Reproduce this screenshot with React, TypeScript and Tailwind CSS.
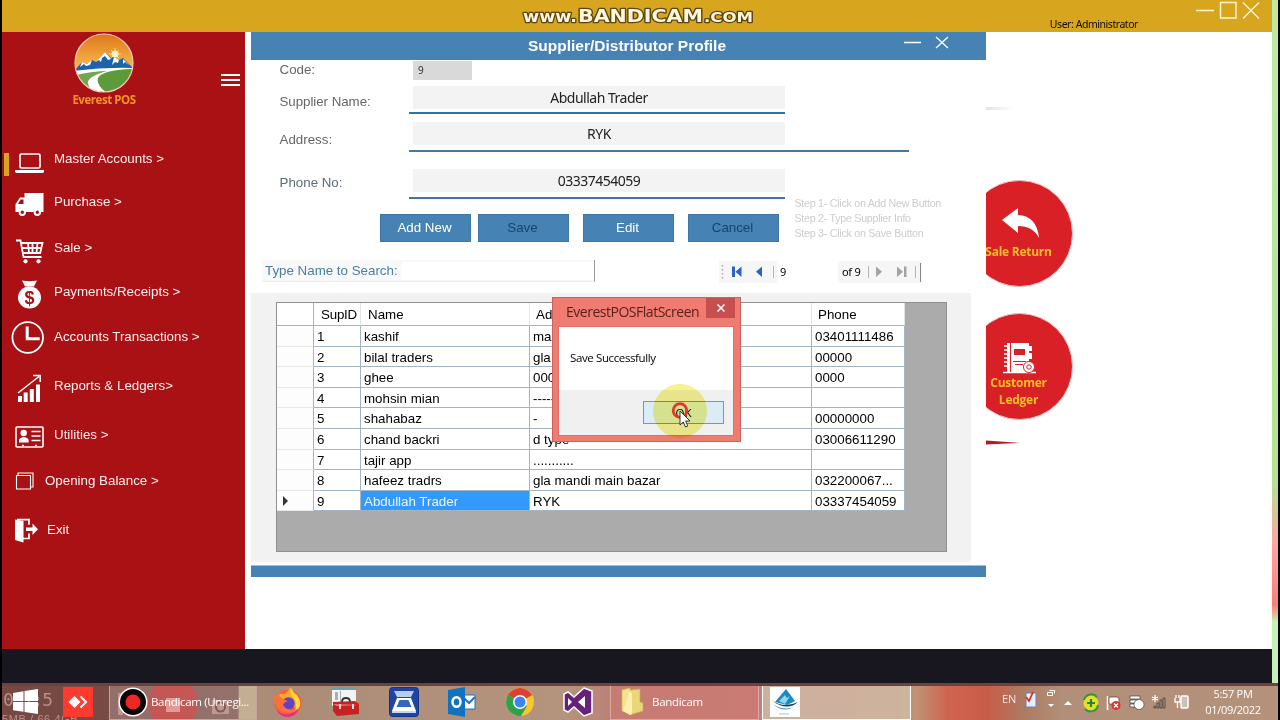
import type { ReactNode } from "react";

const suppliers = [
  { id: "1", name: "kashif", address: "main bazar", phone: "03401111486" },
  { id: "2", name: "bilal traders", address: "gla mandi", phone: "00000" },
  { id: "3", name: "ghee", address: "0000", phone: "0000" },
  { id: "4", name: "mohsin mian", address: "-----", phone: "" },
  { id: "5", name: "shahabaz", address: "-", phone: "00000000" },
  { id: "6", name: "chand backri", address: "d type", phone: "03006611290" },
  { id: "7", name: "tajir app", address: "...........", phone: "" },
  { id: "8", name: "hafeez tradrs", address: "gla mandi main bazar", phone: "032200067..." },
  { id: "9", name: "Abdullah Trader", address: "RYK", phone: "03337454059" },
];

const menuItems = [
  {
    label: "Master Accounts >",
    row: "h-[43px]",
    gap: "ml-[7px]",
    icon: (
      <>
        <rect x="9" y="13" width="20" height="14" rx="1.5" fill="none" stroke="#fff" strokeWidth="1.7" />
        <path d="M4 29h29v1.5q0 1.5-2 1.5H6q-2 0-2-1.5z" />
      </>
    ),
  },
  {
    label: "Purchase >",
    row: "h-[44px]",
    gap: "ml-[7px]",
    icon: (
      <>
        <path d="M13.5 9h19v19h-2.3a4.3 4.3 0 0 0-7.8 0h-7.2a4.3 4.3 0 0 0-7.8 0H4.500v-8L9 13.500h4.500z" />
        <path d="M9.500 15.500h3v4.500H7z" fill="#aa1115" />
        <circle cx="11.300" cy="28.300" r="2.700" fill="none" stroke="#fff" strokeWidth="2" />
        <circle cx="26.300" cy="28.300" r="2.700" fill="none" stroke="#fff" strokeWidth="2" />
      </>
    ),
  },
  {
    label: "Sale >",
    row: "h-[47px]",
    gap: "ml-[7px]",
    icon: (
      <>
        <path
          d="M5 10.500h4.500l3 16.500h18M10 13h21.500l-2.300 10H12M10.700 18h20M17 13l1 10M21.500 13v10M26.500 13l-1 10"
          fill="none"
          stroke="#fff"
          strokeWidth="1.800"
        />
        <circle cx="14.500" cy="31.300" r="2.100" />
        <circle cx="27.500" cy="31.300" r="2.100" />
      </>
    ),
  },
  {
    label: "Payments/Receipts >",
    row: "h-[42px]",
    gap: "ml-[7px]",
    icon: (
      <>
        <path d="M11 6.500q7 1.500 15 0l-3 6h-9z" />
        <ellipse cx="18.500" cy="23.500" rx="11.500" ry="11" />
        <text x="18.500" y="30" textAnchor="middle" fontSize="18" fontWeight="700" fill="#aa1115" fontFamily="Liberation Sans, sans-serif">
          $
        </text>
      </>
    ),
  },
  {
    label: "Accounts Transactions >",
    row: "h-[48px]",
    gap: "ml-[7px]",
    icon: (
      <>
        <circle cx="16.700" cy="18.500" r="15.300" fill="none" stroke="#fff" strokeWidth="1.800" />
        <path d="M16.200 7.500v12.300h12.500" fill="none" stroke="#fff" strokeWidth="3" />
      </>
    ),
  },
  {
    label: "Reports & Ledgers>",
    row: "h-[49px]",
    gap: "ml-[7px]",
    icon: (
      <>
        <path d="M7 28h4v6H7zM12.700 24.500h4V34h-4zM18.800 21h4v13h-4zM25 16.500h4V34h-4z" />
        <path d="M7 25 28 8.500M22 7.500h7.200V14" fill="none" stroke="#fff" strokeWidth="1.500" />
      </>
    ),
  },
  {
    label: "Utilities >",
    row: "h-[49px]",
    gap: "ml-[7px]",
    icon: (
      <>
        <rect x="5" y="10" width="27" height="20" rx="1" fill="none" stroke="#fff" strokeWidth="1.600" />
        <circle cx="12.700" cy="16" r="3.200" />
        <path d="M8 25.500v-2q0-3 4.700-3.500 5 .5 5 3.500v2z" />
        <path d="M20.500 14.500h9M20.500 19h9M20.500 23.500h9M11 28.500h2M24 28.500h2" stroke="#fff" strokeWidth="1.300" />
      </>
    ),
  },
  {
    label: "Opening Balance >",
    row: "h-[44px]",
    gap: "-ml-[2px]",
    icon: (
      <path d="M5.500 12.500h14v13.500h-14zM7 12.500v-2.500h15v14h-2.500" fill="none" stroke="#fff" strokeWidth="1.100" />
    ),
  },
  {
    label: "Exit",
    row: "h-[54px]",
    gap: "ml-0",
    icon: (
      <>
        <path d="M4 7.500 12.500 9v21.500L4 28z" />
        <path d="M6 7.700h12v5M12 26.500h6v-5" fill="none" stroke="#fff" strokeWidth="1.700" />
        <path d="M15 15.500h6.500v-4l5.500 5.700-5.500 5.700v-4H15z" />
      </>
    ),
  },
];

function Sidebar() {
  return (
    <aside className="relative flex w-[243px] shrink-0 flex-col bg-[#aa1115]">
      <div className="flex h-[105px] justify-between pl-[70px] pr-[5px]">
        <div className="flex w-[64px] flex-col items-center">
          <svg className="mt-[1px] h-[60px] w-[60px] shrink-0" viewBox="0 0 60 60">
            <defs>
              <linearGradient id="sky" x1="0" y1="0" x2="0" y2="1">
                <stop offset="0" stopColor="#dd7518" />
                <stop offset=".55" stopColor="#f7b64a" />
              </linearGradient>
              <clipPath id="disc">
                <circle cx="30" cy="30" r="29" />
              </clipPath>
            </defs>
            <g clipPath="url(#disc)">
              <path d="M0 0h60v60H0z" fill="url(#sky)" />
              <circle cx="41" cy="21" r="3.500" fill="#fff3c8" opacity=".9" />
              <path d="M41 15v12M35 21h12M37 17l8 8M45 17l-8 8" stroke="#fff8dc" strokeWidth=".6" />
              <path d="M0 38 8 29l5 2 5-4 4 2 9-10 6 6 3-1 5 3 4-2 11 11v4q-30-3-60 2z" fill="#1d62ad" />
              <path d="m22 29 9-10 6 7-3 1-3-4-3 2-1 4-2-2zM8 29l5 2 5-4-2 5-4 1-2-2-4 3zM40 24l5 3-1 3-3-1-3 3zM49 26l7 7-5-4-2 2z" fill="#fff" />
              <path d="M0 38q30-4 60-3v25H0z" fill="#fff" />
              <path d="M58 36q-30 1-34 9-2 7 9 15h27z" fill="#5c9a3a" />
              <path d="M2 42q18-4 31-4-21 6-19 13 1 4 4 7-12-6-16-16z" fill="#6fa848" />
            </g>
            <circle cx="30" cy="30" r="29" fill="none" stroke="#f4c7bd" strokeWidth="1.200" />
          </svg>
          <span className="-mt-[1px] whitespace-nowrap font-['Open_Sans',sans-serif] text-[11.500px] font-bold leading-[16px] tracking-[-0.450px] text-[#f79322]">
            Everest POS
          </span>
        </div>
        <div className="mt-[42px] flex h-[12px] w-[19px] flex-col justify-between">
          <span className="h-[2px] bg-white" />
          <span className="h-[2px] bg-white" />
          <span className="h-[2px] bg-white" />
        </div>
      </div>
      <span className="absolute left-[2px] top-[121px] h-[23px] w-[5px] bg-[#d7a61e]" />
      {menuItems.map((item) => (
        <div key={item.label} className={`flex items-center pl-[9px] ${item.row}`}>
          <svg className="h-[36px] w-[36px] shrink-0" viewBox="0 0 36 36" fill="#fff">
            {item.icon}
          </svg>
          <span className={`whitespace-nowrap text-[13.330px] leading-[16px] text-[#fdeeee] ${item.gap}`}>
            {item.label}
          </span>
        </div>
      ))}
    </aside>
  );
}

function ActionButton({ label, muted }: { label: string; muted?: boolean }) {
  return (
    <button
      className={`h-[28px] w-[91px] border border-[#3f76a5] bg-[#4682b4] pr-[2px] text-[13.330px] ${
        muted ? "text-[#17456d]" : "text-white"
      }`}
    >
      {label}
    </button>
  );
}

function Field({ value }: { value: string }) {
  return (
    <div className="ml-[4px] h-[23px] w-[372px] bg-[#f3f3f3] text-center font-['Noto_Sans',sans-serif] text-[14px] leading-[23px] tracking-[-0.500px] text-[#222]">
      {value}
    </div>
  );
}

function Navigator() {
  return (
    <div className="flex h-[22px] w-[203px] items-center bg-[#f6f6f6] text-[12px] text-black">
      <svg className="h-[22px] w-[58px]" viewBox="0 0 58 22">
        <path d="M3.500 4v14" stroke="#aaa" strokeWidth="1.500" strokeDasharray="1.500 2.500" />
        <path d="M13 5.500h3v10.500h-3zM22.500 5.500V16l-6-5.300z" fill="#2c62c4" />
        <path d="M43 5.500V16l-6-5.300z" fill="#2c62c4" />
        <path d="M54.500 5v12" stroke="#b5b5b5" />
      </svg>
      <div className="h-[22px] w-[61px] bg-white pl-[3px] font-['Noto_Sans',sans-serif] text-[11px] leading-[21px]">9</div>
      <span className="ml-[4px] whitespace-nowrap font-['Noto_Sans',sans-serif] text-[11px] tracking-[-0.300px]">of 9</span>
      <svg className="ml-auto h-[22px] w-[58px]" viewBox="0 0 58 22">
        <path d="M4.500 5v12M51.500 5v12" stroke="#b5b5b5" />
        <path d="M12 5.500V16l6-5.300zM33 5.500V16l6-5.300zM40 5.500h2.500V16H40z" fill="#a3a3a3" />
        <path d="M56.500 2v19" stroke="#8a8a8a" />
      </svg>
    </div>
  );
}

function Cell({ children, className = "" }: { children?: ReactNode; className?: string }) {
  return (
    <div className={`overflow-hidden whitespace-nowrap border-b border-r border-[#a3b4c4] pl-[3px] ${className}`}>
      {children}
    </div>
  );
}

function SupplierGrid() {
  return (
    <div className="h-[250px] w-[671px] border border-[#8f8f8f] bg-[#ababab] text-[13.330px] text-black">
      <div className="grid h-[23px] w-[628px] grid-cols-[37px_47px_169px_282px_93px] bg-white leading-[23px]">
        <Cell className="border-[#999]" />
        <Cell className="border-r-[#e4e4e4] pl-[7px] tracking-[-0.200px]">SupID</Cell>
        <Cell className="border-r-[#e4e4e4] pl-[7px]">Name</Cell>
        <Cell className="border-r-[#e4e4e4] pl-[6px]">Address</Cell>
        <Cell className="border-r-[#e4e4e4] pl-[6px]">Phone</Cell>
      </div>
      {suppliers.map((row) => {
        const current = row.id === "9";
        return (
          <div
            key={row.id}
            className="grid h-[20.620px] w-[628px] grid-cols-[37px_47px_169px_282px_93px] bg-white leading-[21px]"
          >
            <Cell className="border-b-[#e8e8e8] bg-[#fdfdfd]">
              {current && (
                <svg className="ml-[3px] mt-[5px] h-[10px] w-[6px]" viewBox="0 0 6 10">
                  <path d="M0 0v10l5-5z" fill="#333" />
                </svg>
              )}
            </Cell>
            <Cell>{row.id}</Cell>
            <Cell className={current ? "bg-[#3399ff] text-[#eaf4ff]" : ""}>{row.name}</Cell>
            <Cell>{row.address}</Cell>
            <Cell className="pl-[2px]">{row.phone}</Cell>
          </div>
        );
      })}
    </div>
  );
}

function SupplierPanel() {
  return (
    <section className="flex h-[545px] w-[735px] shrink-0 flex-col bg-white">
      <div className="relative flex h-[28px] shrink-0 items-center justify-center bg-[#4682b4] pl-[17px] text-[15.500px] font-bold text-white">
        Supplier/Distributor Profile
        <svg className="absolute right-[34px] top-[3px] h-[16px] w-[50px]" viewBox="0 0 50 16" stroke="#fff" strokeWidth="1.300">
          <path d="M2 7.500h17M34 2l12 11M46 2 34 13" />
        </svg>
      </div>

      <div className="flex h-[26px]">
        <span className="w-[162px] pl-[28.500px] text-[13.330px] leading-[20px] text-[#666]">Code:</span>
        <span className="mt-[1px] h-[19px] w-[59px] bg-[#d9d9d9] pl-[5px] font-['Noto_Sans',sans-serif] text-[10px] leading-[19px] text-[#333]">9</span>
      </div>
      <div className="flex h-[36px]">
        <span className="w-[158px] pl-[28.500px] text-[13.330px] leading-[31px] tracking-[-0.050px] text-[#666]">Supplier Name:</span>
        <div className="h-[28px] w-[376px] border-b-2 border-[#35709f]">
          <Field value="Abdullah Trader" />
        </div>
      </div>
      <div className="flex h-[47px]">
        <span className="w-[158px] pl-[28.500px] text-[13.330px] leading-[35px] text-[#666]">Address:</span>
        <div className="h-[30px] w-[500px] border-b-2 border-[#4179aa]">
          <Field value="RYK" />
        </div>
      </div>
      <div className="flex h-[45px]">
        <span className="w-[158px] pl-[28.500px] text-[13.330px] leading-[27px] text-[#5d6b7c]">Phone No:</span>
        <div className="h-[30px] w-[376px] border-b-2 border-[#42749c]">
          <Field value="03337454059" />
        </div>
      </div>

      <div className="flex h-[46px] pl-[129px]">
        <div className="flex">
          <ActionButton label="Add New" />
          <span className="w-[7px]" />
          <ActionButton label="Save" muted />
          <span className="w-[14px]" />
          <ActionButton label="Edit" />
          <span className="w-[14px]" />
          <ActionButton label="Cancel" muted />
        </div>
        <div className="-mt-[18px] ml-[15.500px] whitespace-nowrap text-[10.670px] leading-[15px] tracking-[-0.260px] text-[#cdcdcd]">
          <p>Step 1- Click on Add New Button</p>
          <p>Step 2- Type Supplier Info</p>
          <p>Step 3- Click on Save Button</p>
        </div>
      </div>

      <div className="flex h-[33px] pl-[11px]">
        <div className="flex h-[22px] w-[333px] items-center border-b border-r border-b-[#ececec] border-r-[#999] bg-[#f9f9f9] pl-[3px] text-[13.330px] text-[#4a7f9f]">
          Type Name to Search:
          <span className="ml-[4px] h-[18px] flex-1 bg-white" />
        </div>
        <div className="ml-[124px] mt-[1px]">
          <Navigator />
        </div>
      </div>

      <div className="h-[269px] w-[720px] bg-[#f2f2f2] pl-[25px] pt-[9px]">
        <SupplierGrid />
      </div>
      <div className="mt-[3px] h-[12px] border-t border-[#a3c0d9] bg-[#4682b4]" />
    </section>
  );
}

function Shortcuts() {
  return (
    <div className="relative flex flex-1 flex-col gap-[26px] overflow-hidden pt-[148px]">
      <span className="absolute left-0 top-[75px] h-[3px] w-[28px] bg-gradient-to-r from-[#e2e2e2] to-white" />
      <div className="-ml-[20px] flex h-[107px] w-[107px] flex-col items-center rounded-full border border-[#f0c4c4] bg-[#d82026] pr-[2px] font-['Open_Sans',sans-serif] text-[12px] font-bold text-[#f9bf27]">
        <svg className="ml-[4px] mt-[26px] h-[34px] w-[38px]" viewBox="0 0 38 34" fill="#fff">
          <path d="M0 13 16 1v7q19 1 21 23-6-12-21-12v7z" />
        </svg>
        <span className="mt-[3px] whitespace-nowrap leading-[16px] tracking-[-0.250px]">Sale Return</span>
      </div>
      <div className="-ml-[20px] flex h-[107px] w-[107px] flex-col items-center rounded-full border border-[#f0c4c4] bg-[#d82026] pr-[2px] text-center font-['Open_Sans',sans-serif] text-[12px] font-bold leading-[17px] text-[#f9bf27]">
        <svg className="mt-[28px] h-[32px] w-[34px]" viewBox="0 0 34 32">
          <path d="M5 1h22v29H5zM27 4h3v5h-3zM27 11h3v6h-3z" fill="#fff" />
          <path d="M1 30.500h33M2 4h5M2 8h5M2 12h5M2 16h5M2 20h5M2 24h5" stroke="#fff" strokeWidth="1.500" />
          <path d="M8.500 1v29" stroke="#d82026" />
          <path d="M12 7h11v6H12z" fill="#d82026" />
          <path d="M11 19.500h13M13 22.500h8" stroke="#d82026" />
          <circle cx="27" cy="25" r="5.500" fill="#fff" stroke="#d82026" />
          <circle cx="27" cy="25" r="2.200" fill="none" stroke="#d82026" />
        </svg>
        <span className="mt-[1px] leading-[16px] tracking-[-0.250px]">Customer</span>
        <span className="leading-[17px] tracking-[-0.250px]">Ledger</span>
      </div>
      <svg className="absolute left-0 top-[408px] h-[6px] w-[34px]" viewBox="0 0 34 6">
        <path d="M0 0.500 34 3 0 4.500z" fill="#b51a22" />
      </svg>
    </div>
  );
}

function MessageBox() {
  return (
    <div className="absolute left-[552px] top-[297px] h-[145px] w-[189px] border border-[#c9625a] bg-[#f07b71] font-['Open_Sans',sans-serif]">
      <div className="flex h-[28px] pl-[13px]">
        <span className="whitespace-nowrap pt-[3px] text-[14px] leading-[22px] tracking-[-0.480px] text-[#5a201c]">
          EverestPOSFlatScreen
        </span>
        <span className="absolute right-[5px] top-0 flex h-[20px] w-[29px] items-center justify-center bg-[#c74f50]">
          <svg className="h-[8px] w-[8px]" viewBox="0 0 8 8" stroke="#fff" strokeWidth="1.500">
            <path d="m.5.500 7 7M7.500.500l-7 7" />
          </svg>
        </span>
      </div>
      <div className="ml-[5px] mr-[6px] flex h-[110px] flex-col border border-[#dd7068] bg-white text-[11.500px]">
        <div className="flex h-[63px] items-center pb-[2px] pl-[11px] tracking-[-0.380px] text-black">Save Successfully</div>
        <div className="flex flex-1 justify-end bg-[#f0f0f0] pr-[9px] pt-[11px]">
          <button className="h-[23px] w-[81px] border border-[#5d9fd0] bg-[#dcecf7] text-[11.500px] leading-[20px] text-black">OK</button>
        </div>
      </div>
    </div>
  );
}

function Pointer() {
  return (
    <>
      <span className="absolute left-[653px] top-[384px] h-[54px] w-[54px] rounded-full bg-[#f7f392] mix-blend-multiply" />
      <svg className="absolute left-[652px] top-[382px] h-[56px] w-[56px]" viewBox="0 0 56 56">
        <circle cx="28" cy="28.500" r="6.800" fill="none" stroke="#e2382c" strokeWidth="2.800" />
        <path d="M28 29v14l3.300-3 2.200 5 2.300-1-2.200-5h4.400z" fill="#fff" stroke="#222" strokeWidth=".9" />
      </svg>
    </>
  );
}

function Watermark() {
  return (
    <svg
      className="absolute left-[518px] top-[3px] h-[26px] w-[242px]"
      viewBox="0 0 242 26"
      fill="#fff6dc"
      stroke="#5c4610"
      strokeWidth="2.500"
      strokeLinejoin="round"
      paintOrder="stroke"
      fontFamily="DejaVu Sans, sans-serif"
      fontWeight="700"
    >
      <text x="5" y="19" fontSize="16" textLength="54" lengthAdjust="spacingAndGlyphs">www.</text>
      <text x="60" y="19" fontSize="17.500" textLength="125" lengthAdjust="spacingAndGlyphs">BANDICAM</text>
      <text x="186" y="19" fontSize="13.500" textLength="49" lengthAdjust="spacingAndGlyphs">.COM</text>
    </svg>
  );
}

function AppIcon({ children }: { children: ReactNode }) {
  return (
    <svg className="h-[30px] w-[30px] shrink-0" viewBox="0 0 30 30">
      {children}
    </svg>
  );
}

function Taskbar() {
  return (
    <footer className="relative flex h-[37px] w-[1276px] items-center overflow-hidden border-t-[3px] border-[#6c4240] bg-[linear-gradient(90deg,#754842_0px,#7b4e47_236px,#a98b76_237px,#b5947e_560px,#b98377_608px,#c28278_840px,#c09275_915px,#cf6450_945px,#c85c48_985px,#ad7a62_1020px,#b28f78_1060px,#b4917a_1276px)] pb-[3px] font-['Open_Sans',sans-serif] text-white">
      <span className="absolute left-[1px] top-[3px] font-['DejaVu_Sans_Mono',monospace] text-[18px] leading-[22px] tracking-[-1px] text-[#b58f88]">
        0<span className="text-[#8d645e]">0</span>1:5
      </span>
      <span className="absolute left-0 top-[27px] whitespace-nowrap font-['Liberation_Sans',sans-serif] text-[11px] leading-[12px] tracking-[0.600px] text-[#b9918b]">
        5MB / 66.4GB
      </span>

      <div className="relative ml-[11px] w-[50px]">
        <svg className="h-[26px] w-[25px]" viewBox="0 0 25 26" fill="#fff">
          <path d="M0 4 10.500 2.300V12H0zM11.500 2.100 25 0v12H11.500zM0 13h10.500v9.700L0 21.300zM11.500 13H25v12l-13.500-2z" />
        </svg>
      </div>
      <div className="relative w-[46px]">
        <AppIcon>
          <path d="M0 0h30v30H0z" fill="#ff3b30" />
          <path d="m5.500 15 6-6 6 6-6 6z" fill="#fff" />
          <path d="m17.500 9.500 5.500 5.500-5.500 5.500" fill="none" stroke="#fff" strokeWidth="2" />
        </AppIcon>
      </div>

      <div className="relative flex h-[36px] w-[148px] shrink-0 items-center overflow-hidden border border-[#c4a49d] bg-white/20 pl-[8px]">
        <svg className="absolute left-0 top-0 h-[34px] w-[148px]" viewBox="0 0 148 34">
          <circle cx="63" cy="18" r="25" fill="#df4a48" opacity=".65" />
          <path d="M56 13h14v14H56z" fill="#f0b6b0" opacity=".7" />
          <path d="M8 8h5v22H8zM102 15h17v14h-17z" fill="#cfa9a2" opacity=".7" />
          <circle cx="110.500" cy="22" r="4.500" fill="none" stroke="#805850" strokeWidth="2" />
          <path d="M129 0h19v34h-19z" fill="#c9b391" opacity=".7" />
        </svg>
        <svg className="relative h-[30px] w-[30px] shrink-0" viewBox="0 0 30 30">
          <circle cx="15" cy="15" r="14.500" fill="#fff" />
          <circle cx="15" cy="15" r="13" fill="#0c0405" />
          <circle cx="15" cy="15" r="7.500" fill="#ee2626" />
        </svg>
        <span className="relative ml-[3px] whitespace-nowrap text-[11.500px] tracking-[-0.350px]">Bandicam (Unregi...</span>
      </div>

      <div className="ml-[16px] flex gap-[28px]">
        <AppIcon>
          <circle cx="15" cy="16" r="13.500" fill="#ff5a3d" />
          <path d="M17 0q-2 6-7 7-5-1-8 5 0 7 6 9l14-1q5-7-5-20z" fill="#ffa52b" />
          <path d="M18 1q2 5 6 7 6 8 1 15l-5 3q6-8 0-16-4-4-2-9z" fill="#ffdb3d" />
          <circle cx="15.500" cy="16.500" r="6.200" fill="#6442c5" />
          <path d="M1.500 8Q0 18 8 24q9 5 16-2-10 3-14-4 1-3 5-4-8-2-9-7-2 1-2 3z" fill="#ff7139" />
          <path d="M3 22q10 11 23-1-3 9-12 9-7 0-11-8z" fill="#e5317c" />
        </AppIcon>
        <AppIcon>
          <path d="M1 0h24v19H1z" fill="#f1f3f4" />
          <path d="M1 0h24v3H1z" fill="#6e9fa3" />
          <path d="M4 5h3v8H4zM9 4h1v12H9z" fill="#a7b0b5" />
          <path d="M11 15q0-4 4-4t4 4" fill="none" stroke="#39302e" strokeWidth="1.800" />
          <path d="m2 15 22-1 4 3v10l-22 2-4-5z" fill="#c52222" />
          <path d="m2 17 26 1-22 1z" fill="#f07e72" />
          <path d="M8 17h2v5H8zM21 17h2v5h-2z" fill="#f2d5cf" />
        </AppIcon>
        <AppIcon>
          <rect x=".5" y=".5" width="29" height="29" rx="3" fill="#2044a6" stroke="#143489" />
          <path d="M5 4h20l-3 6H8z" fill="#b8cdf0" />
          <path d="M8 11h14l5 13H3z" fill="#fff" />
          <path d="M10.500 13h9l3 7h-15z" fill="#3564c4" />
          <path d="M3 24h24v2H3z" fill="#c5d6f3" />
        </AppIcon>
        <AppIcon>
          <path d="M15 8h13v14H15z" fill="#fff" stroke="#1f76be" />
          <path d="m16 10 6 6 6-6" fill="none" stroke="#1f76be" strokeWidth="2" />
          <path d="m1 3 17-3v30L1 27z" fill="#1272bd" />
          <ellipse cx="9.500" cy="15" rx="4" ry="4.800" fill="none" stroke="#fff" strokeWidth="2.500" />
        </AppIcon>
        <AppIcon>
          <circle cx="15" cy="15" r="14" fill="#f7c72b" />
          <path d="M15 15 2.880 8A14 14 0 0 1 27.120 8z" fill="#de4035" />
          <path d="M15 15 2.880 8A14 14 0 0 0 15 29z" fill="#2da24c" />
          <path d="m15 15-3 14 4-.1L22 19z" fill="#2da24c" />
          <circle cx="15" cy="15" r="7" fill="#fff" />
          <circle cx="15" cy="15" r="5.500" fill="#3f83ee" />
        </AppIcon>
        <AppIcon>
          <path d="m21 1 8 3v22l-8 3-10-9-6 5-4-2V7l4-2 6 5z" fill="#68217a" stroke="#fff" strokeWidth="1.500" />
          <path d="M22 9v12l-7-6zM5 11l4 4-4 4z" fill="#fff" />
        </AppIcon>
      </div>

      <div className="ml-[17px] flex h-[36px] w-[149px] shrink-0 items-center border border-[#dba7a0] bg-[#d3736f]/50 pl-[8px]">
        <AppIcon>
          <path d="m3 3 8-2v26l-8-3z" fill="#f2e38d" stroke="#d1b859" strokeWidth=".7" />
          <path d="m11 3 10-1v13l3 1v8l-13 4z" fill="#e9d678" stroke="#c6ac4d" strokeWidth=".7" />
          <path d="m4 24 7 4 2-1V7l-2-4z" fill="#fbf0ae" />
        </AppIcon>
        <span className="ml-[3px] text-[11.500px] tracking-[-0.300px]">Bandicam</span>
      </div>
      <div className="ml-[3px] flex h-[36px] w-[149px] shrink-0 items-center border border-white bg-[#d0bda8]/80 pl-[7px]">
        <AppIcon>
          <path d="M0 0h30v30H0z" fill="#fff" />
          <path d="M5 15 16 2l9 12-8 4z" fill="#1d89bf" />
          <path d="m9 14 6-6 2 3 3-2-5 8z" fill="#8ed8ee" />
          <path d="M1 13q13 9 27 2-11 10-27-2z" fill="#123c61" />
          <path d="M3 17q12 8 22 2-11 8-22-2z" fill="#2b9bc8" />
          <path d="M9 27h10" stroke="#bbb" />
        </AppIcon>
      </div>

      <div className="ml-[91px] flex items-center">
        <span className="mt-[-5px] w-[22px] text-[11px] tracking-[-0.200px] text-[#f4e7df]">EN</span>
        <svg className="h-[30px] w-[175px]" viewBox="1024 687 175 30">
          <path d="M1026 693h10v14h-10z" fill="#e9eff8" stroke="#6386b8" />
          <path d="m1026 697 3 4 4-9" fill="none" stroke="#d5301e" strokeWidth="1.800" />
          <path d="M1047.500 692.500h5v3h-5zM1049.500 690.500h5v3" fill="none" stroke="#fff" />
          <path d="M1048 704h6l-3 3zM1064 705h8l-4-4z" fill="#fff" />
          <circle cx="1091" cy="703" r="7.500" fill="#e6df28" />
          <path d="M1084 700a7.500 7.500 0 0 1 13-3M1098 705a7.500 7.500 0 0 1-13 4" fill="none" stroke="#2f9a3a" strokeWidth="2" />
          <path d="M1091 699v8M1087 703h8" stroke="#1d8a33" strokeWidth="2.200" />
          <path d="M1107.500 696v14" stroke="#fff" strokeWidth="1.500" />
          <path d="M1109 697h8l2 1v6h-10z" fill="#fff" stroke="#493f3b" strokeWidth=".7" />
          <circle cx="1116" cy="705.500" r="4.500" fill="#d33" />
          <path d="m1114 703.500 4 4m0-4-4 4" stroke="#fff" strokeWidth="1.300" />
          <path d="M1130 696h10v3h-10zM1130 700h8v3h-8zM1130 704h6v3h-6z" fill="#fff" stroke="#493f3b" strokeWidth=".7" />
          <circle cx="1139" cy="704.500" r="5" fill="#fff" stroke="#493f3b" strokeWidth=".7" />
          <path d="M1154 706h2v2h-2zM1157 703h2v5h-2zM1160 700h2v8h-2zM1163 698h2v10h-2z" fill="#a9968a" stroke="#54483f" strokeWidth=".9" />
          <path d="M1155 695v7M1152 697l6 3M1158 697l-6 3" stroke="#fff" strokeWidth="1.200" />
          <rect x="1181" y="696" width="7" height="12" rx="1" fill="#cfc0b5" stroke="#fff" strokeWidth="1.500" />
          <path d="M1175 698v4h5v-4M1176 695v3M1179 695v3M1177.500 702v6" fill="none" stroke="#fff" strokeWidth="1.300" />
        </svg>
      </div>
      <div className="w-[68px] text-center text-[11px] leading-[16px] tracking-[-0.300px]">
        <p>5:57 PM</p>
        <p className="whitespace-nowrap">01/09/2022</p>
      </div>
    </footer>
  );
}

export default function App() {
  return (
    <main className="relative h-[720px] w-[1280px] overflow-hidden bg-black pl-[2px] font-['Liberation_Sans',Arial,sans-serif]">
      <div className="flex h-[683px] w-[1276px]">
        <div className="flex w-[1270px] flex-col bg-[#18161f]">
          <header className="relative h-[32px] bg-[#d7a61e]">
            <span className="absolute right-[134px] top-[17px] whitespace-nowrap font-['Noto_Sans',sans-serif] text-[10.500px] leading-[14px] tracking-[-0.450px] text-[#120d00]">
              User: Administrator
            </span>
            <svg className="absolute right-[10px] top-[1px] h-[20px] w-[68px]" viewBox="0 0 68 20" fill="none" stroke="#fff6d8" strokeWidth="1.400">
              <path d="M2 9.500h18M26.500 1.500h15.500v15.500H26.500zM49 1.500l16 16M65 1.500l-16 16" />
            </svg>
          </header>
          <div className="flex h-[617px] bg-white">
            <Sidebar />
            <div className="w-[6px]" />
            <SupplierPanel />
            <Shortcuts />
          </div>
        </div>
        <div className="w-[6px] bg-[linear-gradient(180deg,#bfe9a0_0px,#b2e38f_480px,#ffa5a0_545px,#fa7e78_605px,#c9f0b4_622px,#c9f0b4_683px)]" />
      </div>
      <Taskbar />
      <Watermark />
      <MessageBox />
      <Pointer />
    </main>
  );
}
